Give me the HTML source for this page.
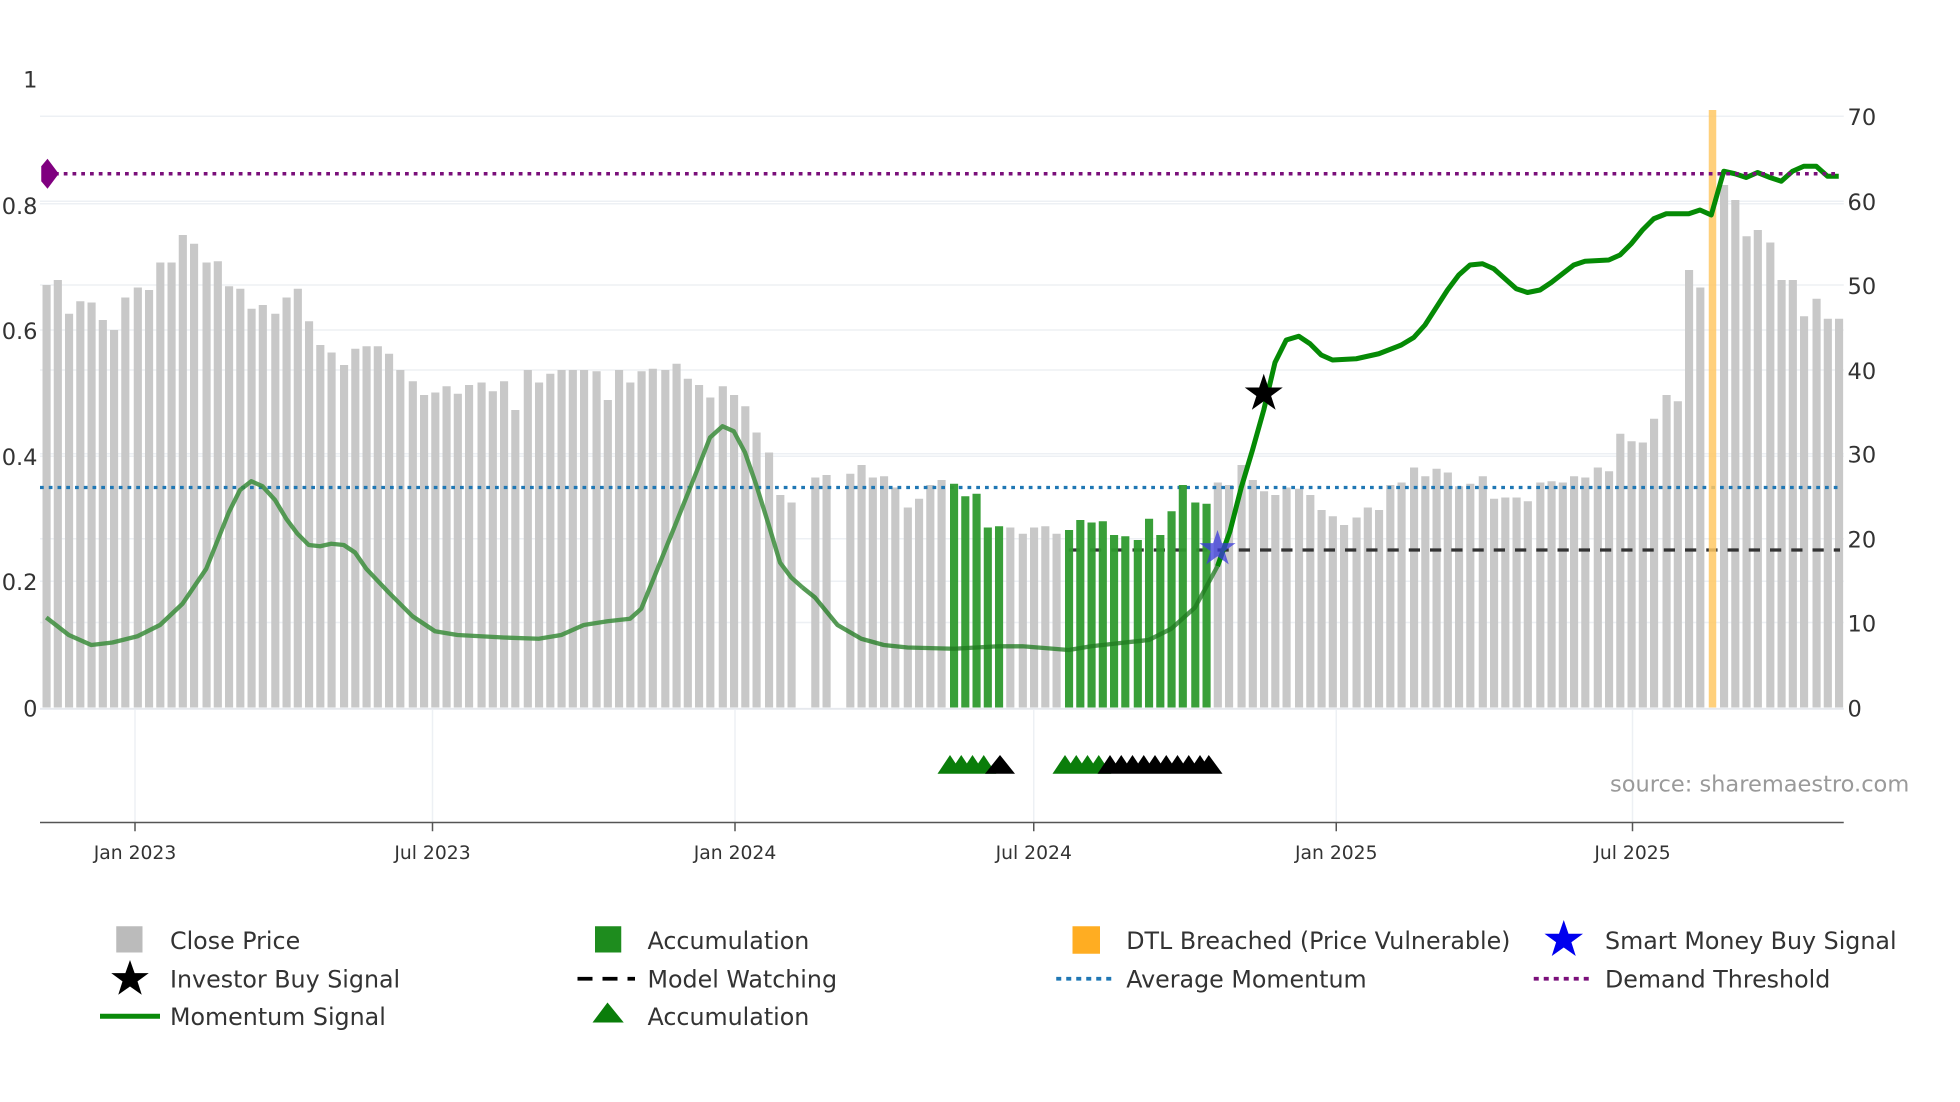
<!DOCTYPE html>
<html><head><meta charset="utf-8"><style>
html,body{margin:0;padding:0;background:#fff;width:1960px;height:1102px;overflow:hidden}
svg{display:block}
text{font-family:"DejaVu Sans","Liberation Sans",sans-serif;fill:#333}
</style></head><body>
<svg width="1960" height="1102" viewBox="0 0 1568 881.6" preserveAspectRatio="none" xmlns="http://www.w3.org/2000/svg">
<g stroke="#edf0f4" stroke-width="1.2">
<line x1="32" y1="93" x2="1475" y2="93"/><line x1="32" y1="161" x2="1475" y2="161"/><line x1="32" y1="228" x2="1475" y2="228"/><line x1="32" y1="296" x2="1475" y2="296"/><line x1="32" y1="363" x2="1475" y2="363"/><line x1="32" y1="431" x2="1475" y2="431"/><line x1="32" y1="498" x2="1475" y2="498"/>
<line x1="32" y1="163" x2="1475" y2="163"/><line x1="32" y1="264" x2="1475" y2="264"/><line x1="32" y1="365" x2="1475" y2="365"/><line x1="32" y1="465" x2="1475" y2="465"/>
<line x1="108" y1="568" x2="108" y2="658"/><line x1="346" y1="568" x2="346" y2="658"/><line x1="588" y1="568" x2="588" y2="658"/><line x1="827" y1="568" x2="827" y2="658"/><line x1="1069" y1="568" x2="1069" y2="658"/><line x1="1306" y1="568" x2="1306" y2="658"/>
</g>
<line x1="32" y1="567" x2="1475" y2="567" stroke="#e6e9ee" stroke-width="1.5"/>
<g fill="#c8c8c8">
<path d="M34 228h6.5V566h-6.5zM43 224h6.5V566h-6.5zM52 251h6.5V566h-6.5zM61 241h6.5V566h-6.5zM70 242h6.5V566h-6.5zM79 256h6.5V566h-6.5zM88 264h6.5V566h-6.5zM97 238h6.5V566h-6.5zM107 230h6.5V566h-6.5zM116 232h6.5V566h-6.5zM125 210h6.5V566h-6.5zM134 210h6.5V566h-6.5zM143 188h6.5V566h-6.5zM152 195h6.5V566h-6.5zM162 210h6.5V566h-6.5zM171 209h6.5V566h-6.5zM180 229h6.5V566h-6.5zM189 231h6.5V566h-6.5zM198 247h6.5V566h-6.5zM207 244h6.5V566h-6.5zM217 251h6.5V566h-6.5zM226 238h6.5V566h-6.5zM235 231h6.5V566h-6.5zM244 257h6.5V566h-6.5zM253 276h6.5V566h-6.5zM262 282h6.5V566h-6.5zM272 292h6.5V566h-6.5zM281 279h6.5V566h-6.5zM290 277h6.5V566h-6.5zM299 277h6.5V566h-6.5zM308 283h6.5V566h-6.5zM317 296h6.5V566h-6.5zM327 305h6.5V566h-6.5zM336 316h6.5V566h-6.5zM345 314h6.5V566h-6.5zM354 309h6.5V566h-6.5zM363 315h6.5V566h-6.5zM372 308h6.5V566h-6.5zM382 306h6.5V566h-6.5zM391 313h6.5V566h-6.5zM400 305h6.5V566h-6.5zM409 328h6.5V566h-6.5zM419 296h6.5V566h-6.5zM428 306h6.5V566h-6.5zM437 299h6.5V566h-6.5zM446 296h6.5V566h-6.5zM455 296h6.5V566h-6.5zM464 296h6.5V566h-6.5zM474 297h6.5V566h-6.5zM483 320h6.5V566h-6.5zM492 296h6.5V566h-6.5zM501 306h6.5V566h-6.5zM510 297h6.5V566h-6.5zM519 295h6.5V566h-6.5zM529 296h6.5V566h-6.5zM538 291h6.5V566h-6.5zM547 303h6.5V566h-6.5zM556 308h6.5V566h-6.5zM565 318h6.5V566h-6.5zM575 309h6.5V566h-6.5zM584 316h6.5V566h-6.5zM593 325h6.5V566h-6.5zM602 346h6.5V566h-6.5zM612 362h6.5V566h-6.5zM621 396h6.5V566h-6.5zM630 402h6.5V566h-6.5z
M649 382h6.5V566h-6.5zM658 380h6.5V566h-6.5zM677 379h6.5V566h-6.5zM686 372h6.5V566h-6.5zM695 382h6.5V566h-6.5zM704 381h6.5V566h-6.5zM713 390h6.5V566h-6.5zM723 406h6.5V566h-6.5zM732 399h6.5V566h-6.5zM741 388h6.5V566h-6.5zM750 384h6.5V566h-6.5z
M805 422h6.5V566h-6.5zM815 427h6.5V566h-6.5zM824 422h6.5V566h-6.5zM833 421h6.5V566h-6.5zM842 427h6.5V566h-6.5z
M971 386h6.5V566h-6.5zM980 388h6.5V566h-6.5zM990 372h6.5V566h-6.5zM999 384h6.5V566h-6.5zM1008 393h6.5V566h-6.5zM1017 396h6.5V566h-6.5zM1026 390h6.5V566h-6.5zM1036 391h6.5V566h-6.5zM1045 396h6.5V566h-6.5zM1054 408h6.5V566h-6.5zM1063 413h6.5V566h-6.5zM1072 420h6.5V566h-6.5zM1082 414h6.5V566h-6.5zM1091 406h6.5V566h-6.5zM1100 408h6.5V566h-6.5zM1109 388h6.5V566h-6.5zM1118 386h6.5V566h-6.5zM1128 374h6.5V566h-6.5zM1137 381h6.5V566h-6.5zM1146 375h6.5V566h-6.5zM1155 378h6.5V566h-6.5zM1164 389h6.5V566h-6.5zM1173 387h6.5V566h-6.5zM1183 381h6.5V566h-6.5zM1192 399h6.5V566h-6.5zM1201 398h6.5V566h-6.5zM1210 398h6.5V566h-6.5zM1219 401h6.5V566h-6.5zM1229 386h6.5V566h-6.5zM1238 385h6.5V566h-6.5zM1247 386h6.5V566h-6.5zM1256 381h6.5V566h-6.5zM1265 382h6.5V566h-6.5zM1275 374h6.5V566h-6.5zM1284 377h6.5V566h-6.5zM1293 347h6.5V566h-6.5zM1302 353h6.5V566h-6.5zM1311 354h6.5V566h-6.5zM1320 335h6.5V566h-6.5zM1330 316h6.5V566h-6.5zM1339 321h6.5V566h-6.5zM1348 216h6.5V566h-6.5zM1357 230h6.5V566h-6.5zM1376 148h6.5V566h-6.5zM1385 160h6.5V566h-6.5zM1394 189h6.5V566h-6.5zM1403 184h6.5V566h-6.5zM1413 194h6.5V566h-6.5zM1422 224h6.5V566h-6.5zM1431 224h6.5V566h-6.5zM1440 253h6.5V566h-6.5zM1450 239h6.5V566h-6.5zM1459 255h6.5V566h-6.5zM1468 255h6.5V566h-6.5z"/>
</g>
<line x1="32" y1="390" x2="1472" y2="390" stroke="#1f77b4" stroke-width="2.6" stroke-dasharray="3,4"/>
<line x1="855" y1="440" x2="1472" y2="440" stroke="#333" stroke-width="2.6" stroke-dasharray="9,8"/>
<polyline fill="none" stroke="#3c8d3c" stroke-opacity="0.85" stroke-width="3.5" stroke-linejoin="round" points="37,494 55,508 73,516 90,514 110,509 128,500 146,483 165,455 183,410 192,392 201,385 210,389 220,400 229,415 238,427 247,436 256,437 265,435 275,436 284,442 293,455 311,474 330,493 348,505 366,508 403,510 431,511 449,508 467,500 486,497 504,495 513,487 522,465 541,418 559,373 568,350 578,341 587,345 596,362 605,388 615,420 624,450 633,462 642,470"/>
<g fill="#2e9a2e" fill-opacity="0.95">
<path d="M760 387h6.5V566h-6.5zM769 397h6.5V566h-6.5zM778 395h6.5V566h-6.5zM787 422h6.5V566h-6.5zM796 421h6.5V566h-6.5zM852 424h6.5V566h-6.5zM861 416h6.5V566h-6.5zM870 418h6.5V566h-6.5zM879 417h6.5V566h-6.5zM888 428h6.5V566h-6.5zM897 429h6.5V566h-6.5zM907 432h6.5V566h-6.5zM916 415h6.5V566h-6.5zM925 428h6.5V566h-6.5zM934 409h6.5V566h-6.5zM943 388h6.5V566h-6.5zM953 402h6.5V566h-6.5zM962 403h6.5V566h-6.5z"/>
</g>
<polyline fill="none" stroke="#1e7a1e" stroke-opacity="0.75" stroke-width="3.5" stroke-linejoin="round" points="642,470 652,478 670,500 689,511 707,516 726,518 763,519 799,517 818,517 855,520 873,517 900,514 919,512 937,503 956,486 974,453"/>
<rect x="1367" y="88" width="6" height="478" fill="#ffc864" fill-opacity="0.85"/>
<polyline fill="none" stroke="#058a05" stroke-width="4" stroke-linejoin="round" points="974,453 984,425 993,390 1002,360 1011,328 1020,290 1029,272 1039,269 1048,275 1057,284 1066,288 1085,287 1103,283 1121,276 1131,270 1140,260 1149,246 1158,232 1167,220 1176,212 1186,211 1195,215 1204,223 1213,231 1222,234 1232,232 1241,226 1250,219 1259,212 1268,209 1287,208 1296,204 1305,195 1314,184 1323,175 1333,171 1351,171 1360,168 1369,172 1379,137 1388,139 1397,142 1406,138 1416,142 1425,145 1434,137 1443,133 1453,133 1462,141 1471,141"/>
<line x1="44" y1="139" x2="1472" y2="139" stroke="#7a0f7a" stroke-width="2.8" stroke-dasharray="3,4"/>
<path d="M38 127 L47 139 L38 151 L33 145 V133 Z" fill="#800080"/>
<path d="M974 424 l3.5 10.5 h11 l-9 6.5 3.5 10.5 -9 -6.5 -9 6.5 3.5 -10.5 -9 -6.5 h11z" fill="#3b3bdc" fill-opacity="0.75"/>
<path d="M1011 299 l3.7 11 h11.5 l-9.3 6.8 3.6 11 -9.5 -6.8 -9.5 6.8 3.6 -11 -9.3 -6.8 h11.5z" fill="#000"/>
<g fill="#0a7d0a"><path d="M750 619 L760 604 L770 619Z M759 619 L769 604 L779 619Z M768 619 L778 604 L788 619Z M777 619 L787 604 L797 619Z M842 619 L852 604 L862 619Z M851 619 L861 604 L871 619Z M860 619 L870 604 L880 619Z M869 619 L879 604 L889 619Z"/></g>
<g fill="#000"><path d="M788 619 L800 604 L812 619Z M878 619 L888 604 L898 619Z M887 619 L897 604 L907 619Z M896 619 L906 604 L916 619Z M905 619 L915 604 L925 619Z M914 619 L924 604 L934 619Z M923 619 L933 604 L943 619Z M932 619 L942 604 L952 619Z M941 619 L951 604 L961 619Z M950 619 L960 604 L970 619Z M957 619 L967 604 L978 619Z"/></g>
<line x1="32" y1="658" x2="1475" y2="658" stroke="#555" stroke-width="1.2"/>
<g stroke="#555" stroke-width="1.2"><line x1="108" y1="658" x2="108" y2="665"/><line x1="346" y1="658" x2="346" y2="665"/><line x1="588" y1="658" x2="588" y2="665"/><line x1="827" y1="658" x2="827" y2="665"/><line x1="1069" y1="658" x2="1069" y2="665"/><line x1="1306" y1="658" x2="1306" y2="665"/></g>
<g font-size="15" text-anchor="middle"><text x="108" y="687">Jan 2023</text><text x="346" y="687">Jul 2023</text><text x="588" y="687">Jan 2024</text><text x="827" y="687">Jul 2024</text><text x="1069" y="687">Jan 2025</text><text x="1306" y="687">Jul 2025</text></g>
<g font-size="18" text-anchor="end"><text x="30" y="70">1</text><text x="30" y="171">0.8</text><text x="30" y="372">0.4</text><text x="30" y="271">0.6</text><text x="30" y="472">0.2</text><text x="30" y="573">0</text></g>
<g font-size="18"><text x="1478" y="100">70</text><text x="1478" y="168">60</text><text x="1478" y="235">50</text><text x="1478" y="303">40</text><text x="1478" y="370">30</text><text x="1478" y="438">20</text><text x="1478" y="505">10</text><text x="1478" y="573">0</text></g>
<text x="1288" y="633" font-size="18" style="fill:#9a9a9a">source: sharemaestro.com</text>
<g font-size="19">
<rect x="93" y="741" width="21" height="21" fill="#bbb"/><text x="136" y="759">Close Price</text>
<path d="M104 768 l3.7 10.5 h11.3 l-9 6.6 3.4 10.7 -9.4 -6.6 -9.4 6.6 3.4 -10.7 -9 -6.6 h11.3z" fill="#000"/><text x="136" y="790">Investor Buy Signal</text>
<line x1="80" y1="813" x2="128" y2="813" stroke="#0a8a0a" stroke-width="4"/><text x="136" y="820">Momentum Signal</text>
<rect x="476" y="741" width="21" height="21" fill="#1e8c1e"/><text x="518" y="759">Accumulation</text>
<line x1="462" y1="783" x2="508" y2="783" stroke="#000" stroke-width="3" stroke-dasharray="12,8"/><text x="518" y="790">Model Watching</text>
<path d="M474 818 L486 802 L499 818Z" fill="#0a7d0a"/><text x="518" y="820">Accumulation</text>
<rect x="858" y="741" width="22" height="22" fill="#ffad22"/><text x="901" y="759">DTL Breached (Price Vulnerable)</text>
<line x1="845" y1="783" x2="891" y2="783" stroke="#1f77b4" stroke-width="3" stroke-dasharray="4,4"/><text x="901" y="790">Average Momentum</text>
<path d="M1251 736 l3.8 11 h11.6 l-9.3 6.8 3.5 11 -9.6 -6.8 -9.6 6.8 3.5 -11 -9.3 -6.8 h11.6z" fill="#0000ee"/><text x="1284" y="759">Smart Money Buy Signal</text>
<line x1="1227" y1="783" x2="1273" y2="783" stroke="#7a0f7a" stroke-width="3" stroke-dasharray="4,4"/><text x="1284" y="790">Demand Threshold</text>
</g>
</svg>
</body></html>
